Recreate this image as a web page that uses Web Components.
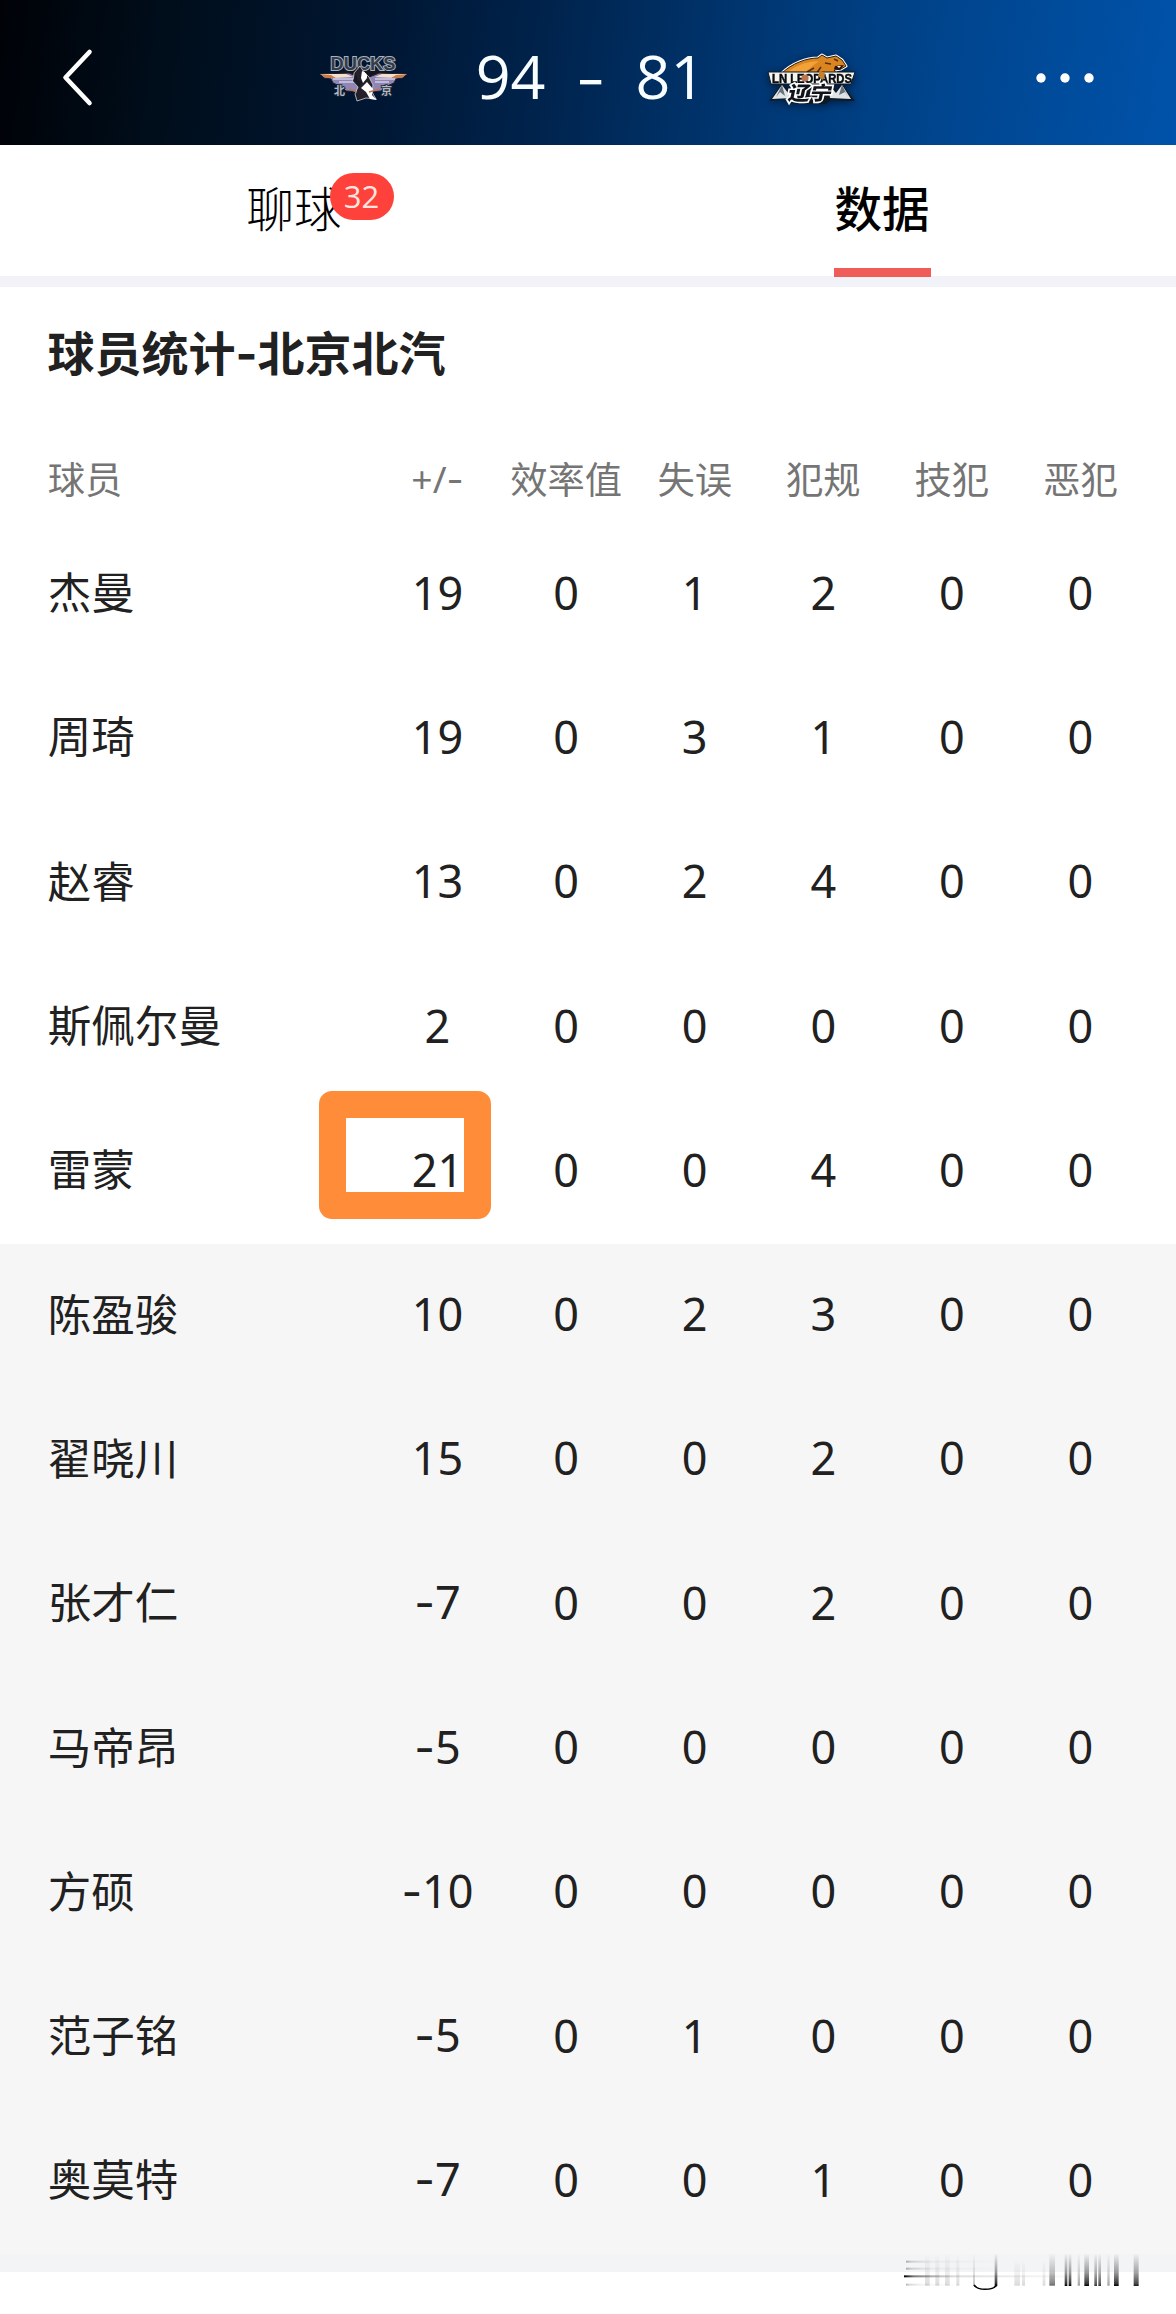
<!DOCTYPE html>
<html lang="zh-CN">
<head>
<meta charset="UTF-8">
<title>球员统计</title>
<style>
    body{
        margin:0;
        background:#fff;
        color:#212121;
        font-family:"Noto Sans","Noto Sans CJK SC",sans-serif;
    }
</style>
</head>
<body>
<app-pantalla></app-pantalla>

<template id="logo-ducks">
    <style>
        :host{display:block;width:90px;height:50px}
        svg{display:block;overflow:visible}
    </style>
    <svg width="90" height="50" viewBox="0 0 90 50">
        <ellipse cx="44" cy="20" rx="24" ry="7" fill="#15151c"/>
        <path d="M1 20 L30 19 L42 24 L42 38 L27 37 L23 33 L14 29 L12 25 L5 24Z" fill="#8f86b4" stroke="#211a28" stroke-width="1"/>
        <path d="M88 20 L60 19 L48 24 L48 38 L62 37 L66 33 L75 29 L77 25 L84 24Z" fill="#8f86b4" stroke="#211a28" stroke-width="1"/>
        <path d="M1 20 L27 20 L34 23 L14 24Z M88 20 L63 20 L56 23 L76 24Z" fill="#f4dfcb"/>
        <path d="M1 20 L12 21 L17 24 L7 24Z M88 20 L77 21 L72 24 L82 24Z" fill="#c77d4a"/>
        <path d="M14 25 L36 25 M20 28 L36 28 M76 25 L56 25 M70 28 L56 28" stroke="#d4cbe8" stroke-width="1.4"/>
        <text x="11.500" y="15.500" textLength="65" lengthAdjust="spacingAndGlyphs" font-family="Liberation Sans" font-weight="700" font-size="19" fill="#343b49" stroke="#a9b1be" stroke-width="2" paint-order="stroke">DUCKS</text>
        <path d="M41 12 L45 18 L50 23 L54 31 L53 38 L57 45 L47 44 L38 47 L36 40 L39 33 L34 27 L35 19Z" fill="#24202b" stroke="#d4d2db" stroke-width=".8"/>
        <path d="M43 17 Q49 19 48 24 L44 29 L42 24Z M48 28 L54 35 L53 41 L58 46 L51 45 L47 38 L42 34Z" fill="#fff"/>
        <path d="M37 20 L34 27 L40 33 L43 28 L39 26Z" fill="#171821"/>
        <path d="M30 35 L38 38 M50 38 L61 35" stroke="#b7755c" stroke-width="1.4"/>
        <text x="15" y="41" font-family="Noto Sans CJK SC" font-weight="700" font-size="11" fill="#aeb8c6" stroke="#1b2330" stroke-width="1.6" paint-order="stroke">北</text>
        <text x="62" y="41" font-family="Noto Sans CJK SC" font-weight="700" font-size="11" fill="#aeb8c6" stroke="#1b2330" stroke-width="1.6" paint-order="stroke">京</text>
    </svg>
</template>

<template id="logo-leopards">
    <style>
        :host{display:block;width:90px;height:50px}
        svg{display:block;overflow:visible;filter:drop-shadow(0 2px 4px #001b3c)}
    </style>
    <svg width="90" height="50" viewBox="0 0 90 50">
        <path d="M2 47 L15 30 L22 36 L27 28 L61 28 L69 36 L74 29 L88 47 L64 46 L58 50 L22 49 L18 45Z" fill="#111820"/>
        <path d="M5 45 L15 31 L21 39 L27 30 L25 44Z M84 45 L75 31 L69 39 L61 30 L63 44Z" fill="#dfe5e6"/>
        <path d="M15 31 L18 42 L13 38 L9 43Z M75 31 L72 41 L78 38 L81 43Z" fill="#66737c"/>
        <path d="M14 20 C25 9 40 4 51 4 L55 1 L60 4 L69 2 L75 6 L79 12 L74 15 L67 16 L70 20 L63 22 L60 29 L54 21Z" fill="#d98520" stroke="#fff" stroke-width="3" stroke-linejoin="round"/>
        <path d="M14 20 C25 9 40 4 51 4 L55 1 L60 4 L69 2 L75 6 L79 12 L74 15 L67 16 L70 20 L63 22 L60 29 L54 21Z" fill="#d98520" stroke="#2d1b0b" stroke-width="1"/>
        <path d="M22 17 Q36 7 52 7 Q45 12 39 18Z" fill="#f2a238"/>
        <path d="M40 18 L47 14 M49 20 L54 13 M58 9 L64 10 M67 5 L71 7" stroke="#5b2d11" stroke-width="1.6"/>
        <path d="M68 12 L77 11 L73 16 L67 15Z" fill="#2a150b"/>
        <path d="M70 12 L72 14 L74 12Z" fill="#fff"/>
        <path d="M1 18 L88 18 L84 30 L4 30Z" fill="#f5f5ee" stroke="#111820" stroke-width="1"/>
        <text x="5" y="28.500" textLength="80" lengthAdjust="spacingAndGlyphs" font-family="Liberation Sans" font-weight="700" font-size="12.500" fill="#070c12" stroke="#070c12" stroke-width=".5">LN LEOPARDS</text>
        <circle cx="38" cy="24" r="3.600" fill="#bd754e"/>
        <path d="M53 16 L58 20 L56 26 L51 22Z" fill="#c8802d"/>
        <text transform="translate(20 46) skewX(-12)" textLength="44" lengthAdjust="spacingAndGlyphs" font-family="Noto Sans CJK SC" font-weight="900" font-size="19" fill="#101318" stroke="#fff" stroke-width="3" paint-order="stroke">辽宁</text>
    </svg>
</template>

<template id="marca">
    <style>
        :host{display:block;width:296px;height:94px}
        svg{display:block}
        .barras rect{fill:url(#caida)}
    </style>
    <svg width="296" height="94" viewBox="0 0 888 282">
        <defs>
            <linearGradient id="caida" x1="0" y1="0" x2="0" y2="1">
                <stop offset="0" stop-color="#111" stop-opacity="0"/>
                <stop offset=".55" stop-color="#111" stop-opacity=".38"/>
                <stop offset=".93" stop-color="#000" stop-opacity=".8"/>
                <stop offset="1" stop-color="#000"/>
            </linearGradient>
            <linearGradient id="linea">
                <stop offset="0" stop-color="#000"/>
                <stop offset=".06" stop-color="#333" stop-opacity=".65"/>
                <stop offset=".3" stop-color="#777" stop-opacity=".25"/>
                <stop offset="1" stop-color="#999" stop-opacity=".05"/>
            </linearGradient>
        </defs>
        <rect x="72" y="166" width="500" height="6" fill="url(#linea)"/>
        <g fill="url(#linea)" opacity=".3">
            <rect x="78" y="122" width="270" height="6"/>
            <rect x="78" y="143" width="270" height="6"/>
            <rect x="78" y="191" width="160" height="6"/>
        </g>
        <g class="barras" opacity=".16">
            <rect x="135" y="100" width="14" height="97"/>
            <rect x="166" y="100" width="12" height="97"/>
            <rect x="195" y="100" width="14" height="97"/>
            <rect x="229" y="100" width="9" height="97"/>
            <rect x="403" y="120" width="17" height="77"/>
            <rect x="426" y="120" width="9" height="77"/>
            <rect x="488" y="120" width="8" height="77"/>
        </g>
        <g class="barras">
            <rect x="344" y="100" width="8" height="97"/>
            <rect x="508" y="100" width="17" height="97" opacity=".6"/>
            <rect x="554" y="100" width="8" height="98"/>
            <rect x="566" y="100" width="8" height="98"/>
            <rect x="593" y="100" width="7" height="97" opacity=".4"/>
            <rect x="613" y="100" width="14" height="98"/>
            <rect x="643" y="100" width="8" height="98" opacity=".8"/>
            <rect x="655" y="100" width="8" height="98" opacity=".8"/>
            <rect x="682" y="100" width="7" height="97" opacity=".4"/>
            <rect x="702" y="100" width="14" height="98"/>
            <rect x="761" y="100" width="15" height="98" opacity=".9"/>
            <rect x="280" y="100" width="4" height="97" opacity=".4"/>
        </g>
        <path d="M282 195 Q291 208 315 208 Q342 208 350 195" fill="none" stroke="#000" stroke-width="4.500"/>
    </svg>
</template>

<script>
// elementos que solo clonan su plantilla
function desdePlantilla(nombre, id){
    customElements.define(nombre, class extends HTMLElement{
        constructor(){
            super()
            this.attachShadow({mode:"open"})
            this.shadowRoot.appendChild(document.getElementById(id).content.cloneNode(true))
        }
    })
}
desdePlantilla("logo-ducks","logo-ducks")
desdePlantilla("logo-leopards","logo-leopards")
desdePlantilla("marca-pie","marca")

class MarcadorBarra extends HTMLElement{
    constructor(){
        super()
        this.attachShadow({mode:"open"})
    }
    connectedCallback(){
        this.shadowRoot.innerHTML = `
            <style>
                :host{
                    display:grid;
                    grid-template-columns:319px 1fr 319px;
                    align-items:center;
                    box-sizing:border-box;
                    height:145px;
                    padding-top:12px;
                    color:#f8fdff;
                    background:linear-gradient(97deg,#000207 0%,#000e1c 15%,#001632 32%,#00234c 46%,#003773 64%,#00458e 80%,#0052aa 100%);
                }
                svg{display:block}
                .atras{padding:0 0 4px 60px}
                .centro{display:flex;align-items:center;justify-content:space-between}
                .puntos{
                    display:flex;
                    align-items:center;
                    padding:0 0 6px 5px;
                    font-family:"Open Sans","Noto Sans",sans-serif;
                    font-size:61px;
                    line-height:70px;
                    font-weight:400;
                }
                .guion{width:90px;padding-top:6px;text-align:center;font-family:Inter,sans-serif;font-weight:300;font-size:70px}
                .mas{padding:0 0 1px 178px}
            </style>
            <div class="atras">
                <svg width="36" height="60" viewBox="0 0 36 60"><path d="M29.500 5 L5.500 30.500 L29.500 56" fill="none" stroke="#fff" stroke-width="4.600" stroke-linecap="round" stroke-linejoin="round"/></svg>
            </div>
            <div class="centro">
                <logo-ducks></logo-ducks>
                <div class="puntos"><span>${this.getAttribute("local")}</span><span class="guion">-</span><span>${this.getAttribute("visita")}</span></div>
                <logo-leopards></logo-leopards>
            </div>
            <div class="mas">
                <svg width="60" height="12" viewBox="0 0 60 12" fill="#fff"><circle cx="6" cy="6" r="4.700"/><circle cx="30" cy="6" r="4.700"/><circle cx="54" cy="6" r="4.700"/></svg>
            </div>
        `
    }
}
customElements.define("marcador-barra",MarcadorBarra)

class PestanaItem extends HTMLElement{
    constructor(){
        super()
        this.attachShadow({mode:"open"})
    }
    connectedCallback(){
        let aviso = this.getAttribute("aviso")
        this.shadowRoot.innerHTML = `
            <style>
                :host{
                    display:flex;
                    flex:1;
                    justify-content:center;
                    color:#000;
                    font-size:47.500px;
                    line-height:70px;
                    font-weight:300;
                }
                .texto{
                    position:relative;
                    box-sizing:border-box;
                    height:132px;
                    padding:29px 1px 0;
                    white-space:nowrap;
                }
                :host([activa]) .texto{font-weight:500;border-bottom:9px solid #f05c5a}
                .aviso{
                    position:absolute;
                    left:84px;
                    top:27.500px;
                    width:64px;
                    height:47px;
                    border-radius:24px;
                    background:#fe413a;
                    color:#ffe4df;
                    font:400 31px/46px "Open Sans","Noto Sans",sans-serif;
                    text-align:center;
                }
            </style>
            <div class="texto"><slot></slot>${aviso ? `<span class="aviso">${aviso}</span>` : ""}</div>
        `
    }
}
customElements.define("pestana-item",PestanaItem)

class PestanasBarra extends HTMLElement{
    constructor(){
        super()
        this.attachShadow({mode:"open"})
        this.shadowRoot.innerHTML = `
            <style>
                :host{display:block;height:142px}
                nav{display:flex;height:131px}
                hr{margin:0;border:0;height:11px;background:#f2f3f8}
            </style>
            <nav><slot></slot></nav>
            <hr>
        `
    }
}
customElements.define("pestanas-barra",PestanasBarra)

// el guion de Inter es mas ancho
function conGuion(texto){
    return texto.replace("-",'<span class="g">-</span>')
}

class FilaJugador extends HTMLElement{
    constructor(){
        super()
        this.attachShadow({mode:"open"})
    }
    connectedCallback(){
        let valores = this.getAttribute("valores").split(",")
        this.shadowRoot.innerHTML = `
            <style>
                :host{
                    display:grid;
                    grid-template-columns:325.500px repeat(6,128.600px);
                    align-items:center;
                    box-sizing:border-box;
                    height:144.300px;
                    padding:0 0 3px 47.700px;
                    background:#fff;
                }
                :host([banca]){background:#f6f6f6}
                :host([cabecera]){height:84.500px;padding-bottom:1px;color:#757575}
                .nombre{padding-bottom:2px;font-size:43.500px;line-height:60px;white-space:nowrap}
                .valor{
                    position:relative;
                    padding-bottom:1px;
                    font-size:45px;
                    line-height:60px;
                    text-align:center;
                    white-space:nowrap;
                }
                :host([cabecera]) .nombre,:host([cabecera]) .valor{padding:0;font-size:37.300px;line-height:50px}
                .g{font-family:Inter,sans-serif}
                :host([marcado]) .nombre + .valor::before{
                    content:"";
                    position:absolute;
                    box-sizing:border-box;
                    left:-54px;
                    top:-49px;
                    width:172px;
                    height:128px;
                    border:27px solid #ff8c38;
                    border-radius:13px;
                }
            </style>
            <div class="nombre"><slot></slot></div>
            ${valores.map(v => `<div class="valor">${conGuion(v)}</div>`).join("")}
        `
    }
}
customElements.define("fila-jugador",FilaJugador)

class TablaEquipo extends HTMLElement{
    constructor(){
        super()
        this.attachShadow({mode:"open"})
    }
    connectedCallback(){
        this.shadowRoot.innerHTML = `
            <style>
                :host{display:block}
                h2{
                    margin:0;
                    padding:31px 0 50px 47.500px;
                    height:70px;
                    font-size:47px;
                    line-height:70px;
                    font-weight:700;
                }
                .g{font-family:Inter,sans-serif}
            </style>
            <h2>${conGuion(this.getAttribute("titulo"))}</h2>
            <slot></slot>
        `
    }
}
customElements.define("tabla-equipo",TablaEquipo)

const jugadores = [
    ["杰曼","19,0,1,2,0,0"],
    ["周琦","19,0,3,1,0,0"],
    ["赵睿","13,0,2,4,0,0"],
    ["斯佩尔曼","2,0,0,0,0,0"],
    ["雷蒙","21,0,0,4,0,0","marcado"],
    ["陈盈骏","10,0,2,3,0,0","banca"],
    ["翟晓川","15,0,0,2,0,0","banca"],
    ["张才仁","-7,0,0,2,0,0","banca"],
    ["马帝昂","-5,0,0,0,0,0","banca"],
    ["方硕","-10,0,0,0,0,0","banca"],
    ["范子铭","-5,0,1,0,0,0","banca"],
    ["奥莫特","-7,0,0,1,0,0","banca"]
]

class AppPantalla extends HTMLElement{
    constructor(){
        super()
        this.attachShadow({mode:"open"})
    }
    connectedCallback(){
        this.shadowRoot.innerHTML = `
            <style>
                :host{display:block;position:relative;width:1176px;height:2314px;overflow:hidden;background:#fff}
                .cierre{height:18px;background:#f2f4f6}
                marca-pie{position:absolute;right:0;bottom:0}
            </style>
            <marcador-barra local="94" visita="81"></marcador-barra>
            <pestanas-barra>
                <pestana-item aviso="32">聊球</pestana-item>
                <pestana-item activa>数据</pestana-item>
            </pestanas-barra>
            <tabla-equipo titulo="球员统计-北京北汽">
                <fila-jugador cabecera valores="+/-,效率值,失误,犯规,技犯,恶犯">球员</fila-jugador>
                ${jugadores.map(([nombre,valores,tipo]) => `<fila-jugador ${tipo || ""} valores="${valores}">${nombre}</fila-jugador>`).join("")}
            </tabla-equipo>
            <div class="cierre"></div>
            <marca-pie></marca-pie>
        `
    }
}
customElements.define("app-pantalla",AppPantalla)
</script>
</body>
</html>
